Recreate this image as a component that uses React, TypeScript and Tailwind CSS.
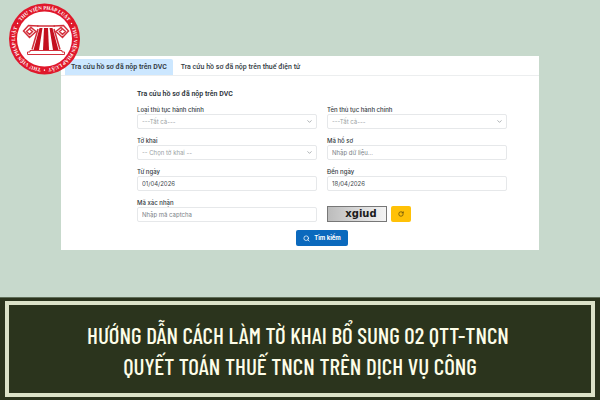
import { ChevronDown, RotateCw, Search } from 'lucide-react'

const ringTurns = [0, 120, 240]

const selects = [
  { id: 'procedure-type', label: 'Loại thủ tục hành chính', placeholder: '---Tất cả---' },
  { id: 'procedure-name', label: 'Tên thủ tục hành chính', placeholder: '---Tất cả---' },
  { id: 'declaration', label: 'Tờ khai', placeholder: '-- Chọn tờ khai --' },
]

const dates = [
  { id: 'from-date', label: 'Từ ngày', value: '01/04/2026' },
  { id: 'to-date', label: 'Đến ngày', value: '18/04/2026' },
]

const labelClass = 'block h-[9px] text-[6px] leading-[9px] font-medium text-[#333b42]'
const boxClass = 'block h-[15px] w-full rounded-xs border border-[#e6e8ea] bg-white px-1 text-[6px] leading-[13px]'
const inputClass = `${boxClass} text-[#42484e] placeholder:text-[#7b8187]`

function Logo() {
  return (
    <svg viewBox="0 0 144 144" className="h-[72px] w-[72px]" role="img" aria-label="Thư Viện Pháp Luật">
      <defs>
        <path id="ring" d="M 73 131 A 59 59 0 0 1 73 13 A 59 59 0 0 1 73 131" />
      </defs>
      <circle cx="73" cy="72" r="71" fill="#e0182b" />
      <circle cx="73" cy="72" r="55" fill="#fff" />
      {ringTurns.map((turn) => (
        <g key={turn} fill="#fff" transform={`rotate(${turn} 73 72)`}>
          <text fontSize="10" fontWeight="700" fontFamily="'Liberation Serif', serif" textAnchor="middle">
            <textPath href="#ring" startOffset="50%">THƯ VIỆN PHÁP LUẬT</textPath>
          </text>
          <circle cx="127" cy="41" r="1.5" />
        </g>
      ))}
      <g fill="none" stroke="#d3303c" strokeWidth="3">
        {/* scrolls */}
        <path d="M61 46 L41 45 L31 56 L43 69 L56 57 L46 49 L37 57 L43 63 L49 57 L44 53" />
        <path d="M91 46 L111 45 L121 56 L109 69 L96 57 L106 49 L115 57 L109 63 L103 57 L108 53" />
        <path d="M58 46 H94" />
        {/* column outline and plinth */}
        <path d="M60 52 L48 93 M92 52 L104 93" />
        <path d="M44 95 H108 V98 H113 V103 H39 V98 H44 Z" strokeWidth="2" />
      </g>
      <g fill="#c4101f">
        <path d="M63 50 H69 L62 94 H51 Z" />
        <path d="M72 50 H80 L82 94 H70 Z" />
        <path d="M83 50 H89 L101 94 H90 Z" />
      </g>
    </svg>
  )
}

function SelectField({ id, label, placeholder }: { id: string; label: string; placeholder: string }) {
  return (
    <div>
      <label htmlFor={id} className={labelClass}>{label}</label>
      <div className="relative">
        <select id={id} className={`${boxClass} appearance-none text-[#9a9fa4]`}>
          <option>{placeholder}</option>
        </select>
        <ChevronDown className="pointer-events-none absolute top-1 right-1 h-[7px] w-[7px] text-[#777d83]" strokeWidth={2} />
      </div>
    </div>
  )
}

function SearchCard() {
  return (
    <section className="bg-white pt-[3px] pb-1 font-['Inter','Noto_Sans',sans-serif]">
      <nav className="flex border-b border-[#eceeef] pl-1 font-['Roboto',sans-serif] text-[7px] leading-4 text-[#333b42]">
        <a href="#dvc" className="rounded-t-xs bg-[#cce7ff] px-1.5 font-semibold whitespace-nowrap">
          Tra cứu hồ sơ đã nộp trên DVC
        </a>
        <a href="#thue-dien-tu" className="px-2 font-medium whitespace-nowrap">
          Tra cứu hồ sơ đã nộp trên thuế điện tử
        </a>
      </nav>

      <form className="pt-3 pr-8 pl-19">
        <h2 className="font-['Roboto',sans-serif] text-[7px] leading-3 font-semibold text-[#2c3339]">
          Tra cứu hồ sơ đã nộp trên DVC
        </h2>

        <div className="mt-[5px] grid grid-cols-2 gap-x-2.5 gap-y-[7px]">
          {selects.map((field) => (
            <SelectField key={field.id} {...field} />
          ))}
          <div>
            <label htmlFor="file-code" className={labelClass}>Mã hồ sơ</label>
            <input id="file-code" type="text" placeholder="Nhập dữ liệu..." className={inputClass} />
          </div>
          {dates.map((field) => (
            <div key={field.id}>
              <label htmlFor={field.id} className={labelClass}>{field.label}</label>
              <input id={field.id} type="text" defaultValue={field.value} className={inputClass} />
            </div>
          ))}
          <div>
            <label htmlFor="captcha" className={labelClass}>Mã xác nhận</label>
            <input id="captcha" type="text" placeholder="Nhập mã captcha" className={inputClass} />
          </div>
          <div className="flex items-end gap-1">
            <div className="flex h-4 w-15 items-center justify-center border border-[#777] bg-linear-to-r from-[#bcbcbc] to-[#f4f4f4] pl-2 font-['DejaVu_Sans',sans-serif] text-[10px] leading-3 font-bold text-[#1c1c1c]">
              xgiud
            </div>
            <button type="button" aria-label="Đổi mã captcha" className="flex h-4 w-5 items-center justify-center rounded-xs bg-[#ffc107] text-[#4a3b0c]">
              <RotateCw className="h-[6px] w-[6px]" strokeWidth={2.5} />
            </button>
          </div>
        </div>

        <div className="mt-2 flex justify-center">
          <button type="submit" className="flex h-4 w-[52px] items-center justify-center gap-1 rounded-xs bg-[#0b69bd] text-[6px] leading-4 font-bold whitespace-nowrap text-white">
            <Search className="h-[7px] w-[7px]" strokeWidth={2.5} />
            Tìm kiếm
          </button>
        </div>
      </form>
    </section>
  )
}

export default function App() {
  return (
    <div className="flex min-h-screen flex-col bg-[#c7d9cc]">
      <main className="relative flex-1 px-[61px] pt-14 pb-8">
        <SearchCard />
        <div className="absolute top-[3px] left-2">
          <Logo />
        </div>
      </main>

      <footer className="border-t border-[#5f6e58] bg-[#2b341d] px-[5px] py-[3px]">
        <h1 className="border-4 border-[#dce2c8] pt-[15px] pb-[11px] text-center font-['Barlow_Condensed','Roboto_Condensed','Liberation_Sans_Narrow',sans-serif] text-[23px] leading-[31px] font-medium text-[#fdfde8]">
          <span className="pr-1">HƯỚNG DẪN CÁCH LÀM TỜ KHAI BỔ SUNG 02 QTT-TNCN</span>
          <br />
          QUYẾT TOÁN THUẾ TNCN TRÊN DỊCH VỤ CÔNG
        </h1>
      </footer>
    </div>
  )
}
